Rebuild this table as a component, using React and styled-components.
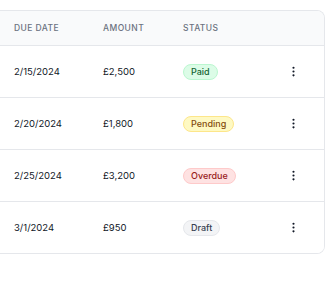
import React from "react";
import styled, { createGlobalStyle } from "styled-components";
import { EllipsisVertical } from "lucide-react";

const GlobalStyle = createGlobalStyle`
  html, body { margin: 0; padding: 0; background: #ffffff; }
  body { font-family: Inter, "Noto Sans", "Liberation Sans", sans-serif; color: #111827; }
`;

const Page = styled.div`
  padding: 10px 10px 0 0;
  overflow: hidden;
`;

const Card = styled.div`
  border: 1px solid #e5e7eb;
  border-left: none;
  border-radius: 0 8px 8px 0;
  background: #ffffff;
  overflow: hidden;
`;

const Row = styled.div`
  display: grid;
  grid-template-columns: 89px 80px 1fr 62px;
  align-items: center;
  height: ${(p) => (p.$head ? "34px" : "51px")};
  background: ${(p) => (p.$head ? "#f9fafb" : "#ffffff")};
  border-bottom: ${(p) => (p.$last ? "none" : "1px solid #e5e7eb")};
`;

const HeadCell = styled.div`
  padding-left: 14px;
  font-size: 8.5px;
  font-weight: 500;
  letter-spacing: 0.05em;
  text-transform: uppercase;
  color: #6b7280;
`;

const Cell = styled.div`
  padding-left: 14px;
  font-size: 9.5px;
  color: #111827;
`;

const tones = {
  Paid: { bg: "#dcfce7", border: "#bbf7d0", fg: "#166534" },
  Pending: { bg: "#fef9c3", border: "#fde68a", fg: "#854d0e" },
  Overdue: { bg: "#fee2e2", border: "#fecaca", fg: "#991b1b" },
  Draft: { bg: "#f3f4f6", border: "#e5e7eb", fg: "#374151" },
};

const Badge = styled.span`
  display: inline-flex;
  align-items: center;
  height: 14px;
  padding: 0 7px;
  border-radius: 999px;
  font-size: 9px;
  font-weight: 500;
  background: ${(p) => tones[p.$status].bg};
  border: 1px solid ${(p) => tones[p.$status].border};
  color: ${(p) => tones[p.$status].fg};
`;

const ActionCell = styled.div`
  display: flex;
  justify-content: center;
  color: #111827;
`;

const rows = [
  { due: "2/15/2024", amount: "£2,500", status: "Paid" },
  { due: "2/20/2024", amount: "£1,800", status: "Pending" },
  { due: "2/25/2024", amount: "£3,200", status: "Overdue" },
  { due: "3/1/2024", amount: "£950", status: "Draft" },
];

export default function App() {
  return (
    <Page>
      <GlobalStyle />
      <Card>
        <Row $head>
          <HeadCell>Due Date</HeadCell>
          <HeadCell>Amount</HeadCell>
          <HeadCell>Status</HeadCell>
          <HeadCell />
        </Row>
        {rows.map((r, i) => (
          <Row key={r.due} $last={i === rows.length - 1}>
            <Cell>{r.due}</Cell>
            <Cell>{r.amount}</Cell>
            <Cell>
              <Badge $status={r.status}>{r.status}</Badge>
            </Cell>
            <ActionCell>
              <EllipsisVertical size={13} strokeWidth={2} />
            </ActionCell>
          </Row>
        ))}
      </Card>
    </Page>
  );
}
